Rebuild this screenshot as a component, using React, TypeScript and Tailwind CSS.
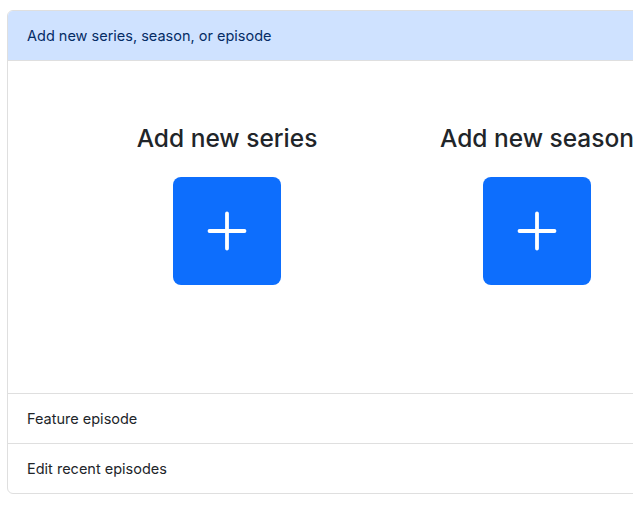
import React from "react";

function PlusButton() {
  return (
    <button className="flex h-[108px] w-[108px] items-center justify-center rounded-[8px] bg-[#0d6efd]">
      <svg width="40" height="40" viewBox="0 0 40 40" fill="none">
        <path d="M20 2.5v35M2.5 20h35" stroke="#fff" strokeWidth="3.8" strokeLinecap="round" />
      </svg>
    </button>
  );
}

function Column({ title }: { title: string }) {
  return (
    <div className="flex w-[310px] shrink-0 flex-col items-center">
      <h3 className="whitespace-nowrap text-[24.5px] font-medium leading-[30px] text-[#212529]">{title}</h3>
      <div className="mt-[24px]">
        <PlusButton />
      </div>
    </div>
  );
}

export default function App() {
  return (
    <div
      className="h-[514px] w-[633px] overflow-hidden bg-white pl-[7px] pt-[10px]"
      style={{ fontFamily: "Inter, 'Liberation Sans', sans-serif" }}
    >
      <div className="w-[1100px] overflow-hidden rounded-[6px] border border-[#dfdfdf]">
        <div className="border-b border-[#dfdfdf] bg-[#cfe2ff] px-[19px] py-[12px] text-[14.5px] leading-[25px] text-[#052c65]">
          Add new series, season, or episode
        </div>
        <div className="flex h-[333px] border-b border-[#dfdfdf] pl-[64px] pt-[62px]">
          <Column title="Add new series" />
          <Column title="Add new season" />
          <Column title="Add new episode" />
        </div>
        <div className="border-b border-[#dfdfdf] px-[19px] py-[12px] text-[14.5px] leading-[25px] text-[#212529]">
          Feature episode
        </div>
        <div className="px-[19px] py-[12px] text-[14.5px] leading-[25px] text-[#212529]">
          Edit recent episodes
        </div>
      </div>
    </div>
  );
}
